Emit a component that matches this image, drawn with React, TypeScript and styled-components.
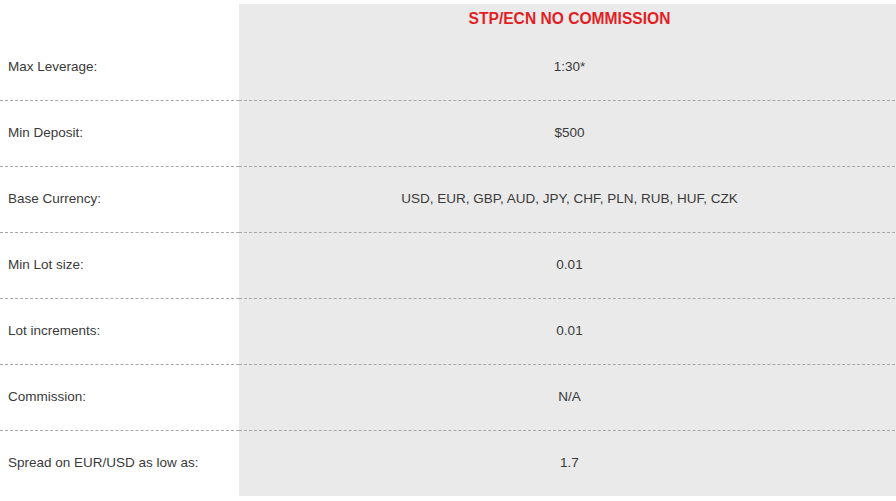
import React from "react";
import styled, { createGlobalStyle } from "styled-components";

const Global = createGlobalStyle`
  html, body { margin: 0; padding: 0; background: #fff; overflow: hidden; }
  body { font-family: "Liberation Sans", Arial, sans-serif; }
`;

const Page = styled.div`
  padding-top: 4px;
  width: 900px;
`;

const Table = styled.div`
  display: grid;
  grid-template-columns: 239px 1fr;
`;

const Row = styled.div<{ $last?: boolean; $head?: boolean }>`
  display: contents;
  & > div {
    height: ${(p) => (p.$head ? "31px" : p.$last ? "65px" : "66px")};
    border-bottom: ${(p) => (p.$last || p.$head ? "none" : "1px dashed #a8a8a8")};
  }
`;

const Label = styled.div`
  display: flex;
  align-items: center;
  box-sizing: border-box;
  padding: 0 0 2px 8px;
  font-size: 13.5px;
  color: #3a3a3a;
  background: #fff;
`;

const Value = styled.div`
  display: flex;
  align-items: center;
  justify-content: center;
  box-sizing: border-box;
  padding-bottom: 2px;
  font-size: 13.5px;
  color: #3a3a3a;
  background: #eaeaea;
`;

const Heading = styled(Value)`
  color: #e31e24;
  font-weight: bold;
  font-size: 15.6px;
  padding-bottom: 1px;
`;

const rows: [string, string][] = [
  ["Max Leverage:", "1:30*"],
  ["Min Deposit:", "$500"],
  ["Base Currency:", "USD, EUR, GBP, AUD, JPY, CHF, PLN, RUB, HUF, CZK"],
  ["Min Lot size:", "0.01"],
  ["Lot increments:", "0.01"],
  ["Commission:", "N/A"],
  ["Spread on EUR/USD as low as:", "1.7"],
];

export default function App() {
  return (
    <>
      <Global />
      <Page>
        <Table>
          <Row $head>
            <Label />
            <Heading>STP/ECN NO COMMISSION</Heading>
          </Row>
          {rows.map(([l, v], i) => (
            <Row key={l} $last={i === rows.length - 1}>
              <Label>{l}</Label>
              <Value>{v}</Value>
            </Row>
          ))}
        </Table>
      </Page>
    </>
  );
}
